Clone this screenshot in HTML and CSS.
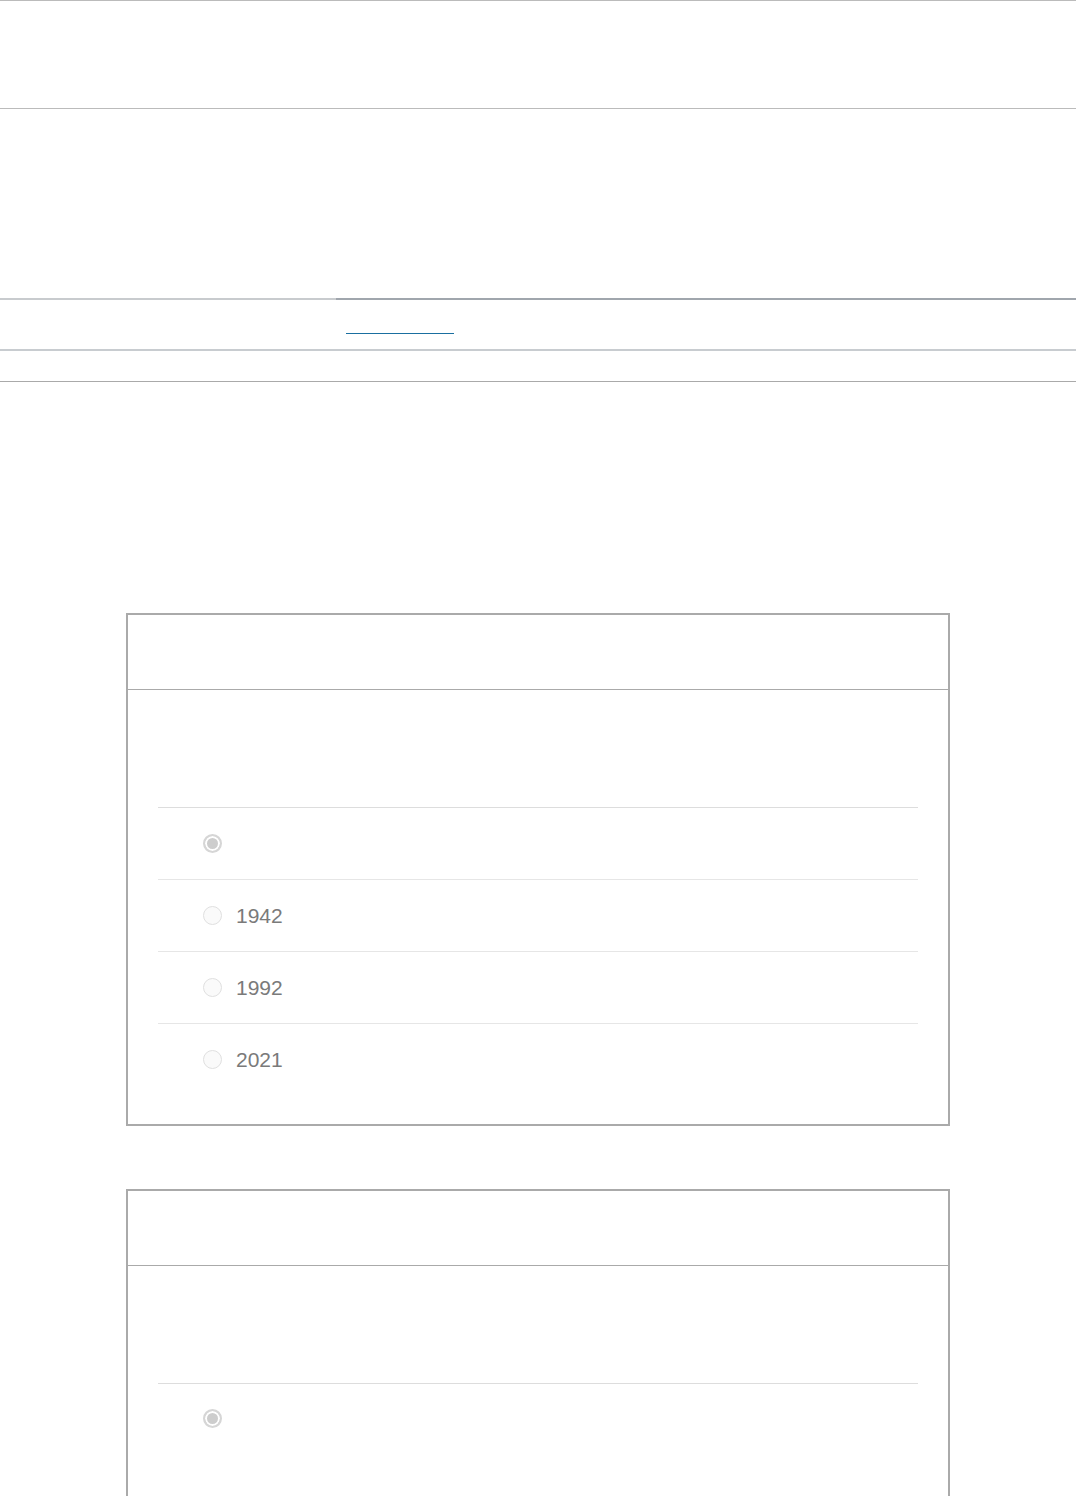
FILE: index.html
```html
<!DOCTYPE html>
<html lang="en">
<head>
    <meta charset="UTF-8">
    <meta name="viewport" content="width=device-width, initial-scale=1.0">
    <title>Quiz</title>
    <link rel="stylesheet" href="styles.css">
</head>
<body>
    <header class="site-header"></header>
    <section class="hero"></section>
    <div class="progress"><div class="progress-fill"></div></div>
    <nav class="tabs"><span class="tab-link"></span></nav>
    <div class="subbar"></div>

    <main class="quiz">
        <section class="card">
            <div class="card-head"></div>
            <div class="card-body">
                <ul class="options">
                    <li class="option"><span class="radio checked"></span><span class="label"></span></li>
                    <li class="option"><span class="radio"></span><span class="label">1942</span></li>
                    <li class="option"><span class="radio"></span><span class="label">1992</span></li>
                    <li class="option"><span class="radio"></span><span class="label">2021</span></li>
                </ul>
            </div>
        </section>

        <section class="card">
            <div class="card-head"></div>
            <div class="card-body">
                <ul class="options">
                    <li class="option tall"><span class="radio checked"></span><span class="label"></span></li>
                </ul>
            </div>
        </section>
    </main>
</body>
</html>
```

FILE: styles.css
```css
body {
    margin: 0;
    font-family: "Liberation Sans", Arial, sans-serif;
    background-color: #fff;
    color: #7a7a7a;
}
.site-header {
    height: 107px;
    border-top: 1px solid #bbb;
    border-bottom: 1px solid #bbb;
}
.hero {
    height: 189px;
}
.progress {
    height: 2px;
    background-color: #a0a6ad;
}
.progress-fill {
    width: 336px;
    height: 2px;
    background-color: #c8cbce;
}
.tabs {
    height: 16px;
    border-bottom: 2px solid #c8ccd0;
    padding: 33px 0 0 346px;
}
.tab-link {
    display: block;
    width: 108px;
    border-bottom: 1px solid #1a6fa0;
}
.subbar {
    height: 30px;
    border-bottom: 1px solid #aaa;
}
.quiz {
    padding: 231px 126px 0 126px;
    display: flex;
    flex-direction: column;
    gap: 63px;
}
.card {
    border: 2px solid #aaa;
}
.card-head {
    height: 74px;
    border-bottom: 1px solid #aaa;
}
.card-body {
    padding: 117px 30px 29px 30px;
}
.options {
    list-style: none;
    margin: 0;
    padding: 0;
}
.option {
    display: flex;
    align-items: center;
    height: 71px;
    border-top: 1px solid #e6e6e6;
    font-size: 21px;
}
.option:first-child {
    border-top-color: #ddd;
}
.option.tall {
    align-items: flex-start;
    height: 140px;
    padding-top: 25px;
}
.radio {
    width: 17px;
    height: 17px;
    border-radius: 50%;
    border: 1px solid #e0e0e0;
    background-color: #fafafa;
    margin-left: 45px;
    margin-right: 14px;
    flex-shrink: 0;
}
.radio.checked {
    width: 15px;
    height: 15px;
    border: 2px solid #d6d6d6;
    background-color: #cdcdcd;
    box-shadow: inset 0 0 0 2px #fff;
}
```
